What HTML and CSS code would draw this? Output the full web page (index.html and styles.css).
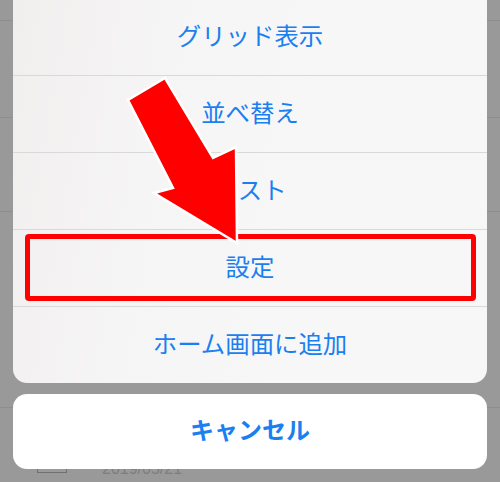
FILE: index.html
```html
<!DOCTYPE html>
<html lang="ja">
<head>
<meta charset="utf-8">
<link rel="stylesheet" href="styles.css">
</head>
<body>
<div class="bg-list">
  <div class="bg-row r1"></div>
  <div class="bg-row r2"></div>
  <div class="bg-row r3"></div>
  <div class="bg-row r4"></div>
  <div class="bg-row r5">
    <span class="file-icon"></span>
    <span class="date">2019/05/21</span>
  </div>
</div>

<div class="action-sheet">
  <div class="group">
    <div class="item">グリッド表示</div>
    <div class="item">並べ替え</div>
    <div class="item">リスト</div>
    <div class="item">設定</div>
    <div class="item">ホーム画面に追加</div>
  </div>
  <div class="cancel">キャンセル</div>
</div>

<div class="highlight"></div>

<svg class="arrow" width="500" height="482" viewBox="0 0 500 482">
  <polygon points="128,100 165,78 213,158 236,147 237,243 154,193 173,188" fill="#ff0000" stroke="#ffffff" stroke-width="2.5" stroke-linejoin="miter"/>
</svg>
</body>
</html>
```

FILE: styles.css
```css
html, body {
  margin: 0;
  padding: 0;
}
body {
  width: 500px;
  height: 482px;
  overflow: hidden;
  background: #999999;
  position: relative;
  font-family: "Noto Sans CJK JP", "Noto Sans", sans-serif;
}
.bg-list {
  display: flex;
  flex-direction: column;
}
.bg-row {
  border-bottom: 1px solid #8e8e8e;
  box-sizing: border-box;
}
.r1 { height: 21px; }
.r2 { height: 97px; }
.r3 { height: 94px; }
.r4 { height: 196px; }
.r5 {
  border-bottom: none;
  height: 80px;
  display: flex;
  align-items: flex-start;
  padding-top: 52px;
  box-sizing: border-box;
}
.file-icon {
  display: block;
  width: 30px;
  height: 13px;
  margin-left: 37px;
  border: 1.5px solid #707070;
  box-sizing: border-box;
}
.date {
  margin-left: 35px;
  margin-top: 1px;
  font-family: "Liberation Sans", Arial, sans-serif;
  font-size: 16px;
  line-height: 16px;
  color: #7e7e7e;
}
.action-sheet {
  position: absolute;
  left: 13px;
  top: -1px;
  width: 474px;
  display: flex;
  flex-direction: column;
  gap: 11px;
}
.group {
  background: linear-gradient(100deg, #f1eeee 0%, #f6f5f5 30%, #f7f7f7 60%);
  border-radius: 0 0 14px 14px;
  overflow: hidden;
}
.item {
  height: 76px;
  padding-bottom: 5px;
  box-sizing: content-box;
  display: flex;
  align-items: center;
  justify-content: center;
  font-size: 24.4px;
  color: #1a7ff0;
  border-bottom: 1px solid #d9d9d9;
}
.item {
  height: 71px;
}
.item:last-child {
  border-bottom: none;
}
.cancel {
  height: 69px;
  padding-bottom: 6px;
  background: #ffffff;
  border-radius: 14px;
  display: flex;
  align-items: center;
  justify-content: center;
  font-size: 24px;
  font-weight: bold;
  color: #1a7ff0;
}
.highlight {
  position: absolute;
  left: 25px;
  top: 234px;
  width: 451px;
  height: 67px;
  border: 5px solid #ff0000;
  border-radius: 4px;
  box-sizing: border-box;
}
.arrow {
  position: absolute;
  left: 0;
  top: 0;
}
```
